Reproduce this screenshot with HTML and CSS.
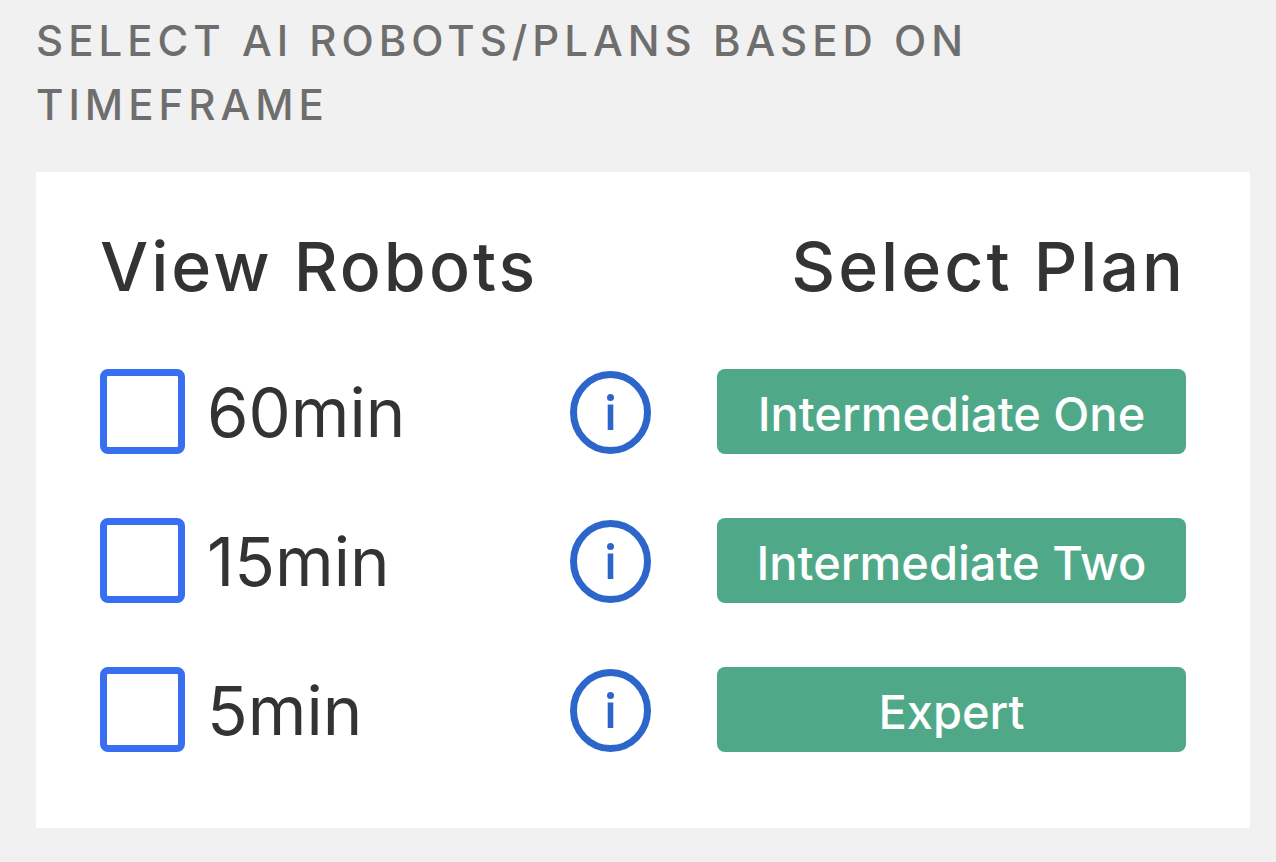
FILE: index.html
```
<!DOCTYPE html>
<html lang="en">
<head>
  <meta charset="UTF-8">
  <title>Select AI Robots/Plans</title>
  <meta name="viewport" content="width=device-width, initial-scale=1.0">
  <link rel="stylesheet" href="styles.css">
</head>
<body>

  <h1 class="caption">Select AI Robots/Plans based on timeframe</h1>

  <div class="card">
    <div class="card-header">
      <h2>View Robots</h2>
      <h2>Select Plan</h2>
    </div>

    <div class="plan-row">
      <input type="checkbox" id="min60">
      <label for="min60">60min</label>
      <button class="info-btn" aria-label="About 60min">
        <svg viewBox="0 0 81 83">
          <ellipse cx="40.5" cy="41.5" rx="37" ry="38"/>
          <circle class="fill" cx="40.5" cy="26.5" r="3.5"/>
          <path class="fill" d="M37.7 33.5h5.6v25.5h-5.6z"/>
        </svg>
      </button>
      <button class="plan-btn">Intermediate One</button>
    </div>

    <div class="plan-row">
      <input type="checkbox" id="min15">
      <label for="min15">15min</label>
      <button class="info-btn" aria-label="About 15min">
        <svg viewBox="0 0 81 83">
          <ellipse cx="40.5" cy="41.5" rx="37" ry="38"/>
          <circle class="fill" cx="40.5" cy="26.5" r="3.5"/>
          <path class="fill" d="M37.7 33.5h5.6v25.5h-5.6z"/>
        </svg>
      </button>
      <button class="plan-btn">Intermediate Two</button>
    </div>

    <div class="plan-row">
      <input type="checkbox" id="min5">
      <label for="min5">5min</label>
      <button class="info-btn" aria-label="About 5min">
        <svg viewBox="0 0 81 83">
          <ellipse cx="40.5" cy="41.5" rx="37" ry="38"/>
          <circle class="fill" cx="40.5" cy="26.5" r="3.5"/>
          <path class="fill" d="M37.7 33.5h5.6v25.5h-5.6z"/>
        </svg>
      </button>
      <button class="plan-btn">Expert</button>
    </div>
  </div>

</body>
</html>
```
FILE: styles.css
```
* { box-sizing: border-box; }
body {
  margin: 0;
  padding: 9px 26px 35px 36px;
  background: #f1f1f1;
  font-family: Inter, "Liberation Sans", sans-serif;
  color: #333;
}
.caption {
  margin: 0 0 35px;
  font-size: 42px;
  line-height: 64px;
  font-weight: 500;
  letter-spacing: 5px;
  text-transform: uppercase;
  color: #6e6e6e;
}
.card {
  padding: 52px 64px 76px;
  background: #fff;
}
.card-header {
  display: flex;
  justify-content: space-between;
  margin-bottom: 61px;
}
.card-header h2 {
  margin: 0;
  font-size: 68px;
  line-height: 84px;
  font-weight: 500;
  letter-spacing: 3px;
}
.plan-row {
  display: grid;
  grid-template-columns: 85px 1fr 81px 535px;
  align-items: end;
}
.plan-row + .plan-row {
  margin-top: 64px;
}
.plan-row input {
  appearance: none;
  width: 85px;
  height: 85px;
  margin: 0;
  border: 7px solid #376ff0;
  border-radius: 8px;
  background: #fff;
}
.plan-row input:checked {
  background: #376ff0;
}
.plan-row label {
  padding-left: 22px;
  font-size: 67px;
  line-height: 83px;
}
.info-btn {
  width: 81px;
  height: 83px;
  padding: 0;
  border: none;
  background: none;
}
.info-btn svg {
  display: block;
  fill: none;
  stroke: #2d66cb;
  stroke-width: 7;
}
.info-btn .fill {
  fill: #2d66cb;
  stroke: none;
}
.plan-btn {
  height: 85px;
  margin-left: 66px;
  padding: 4px 0 0;
  border: none;
  border-radius: 8px;
  background: #4fa989;
  font-family: inherit;
  font-size: 47px;
  font-weight: 500;
  color: #fff;
}
```
